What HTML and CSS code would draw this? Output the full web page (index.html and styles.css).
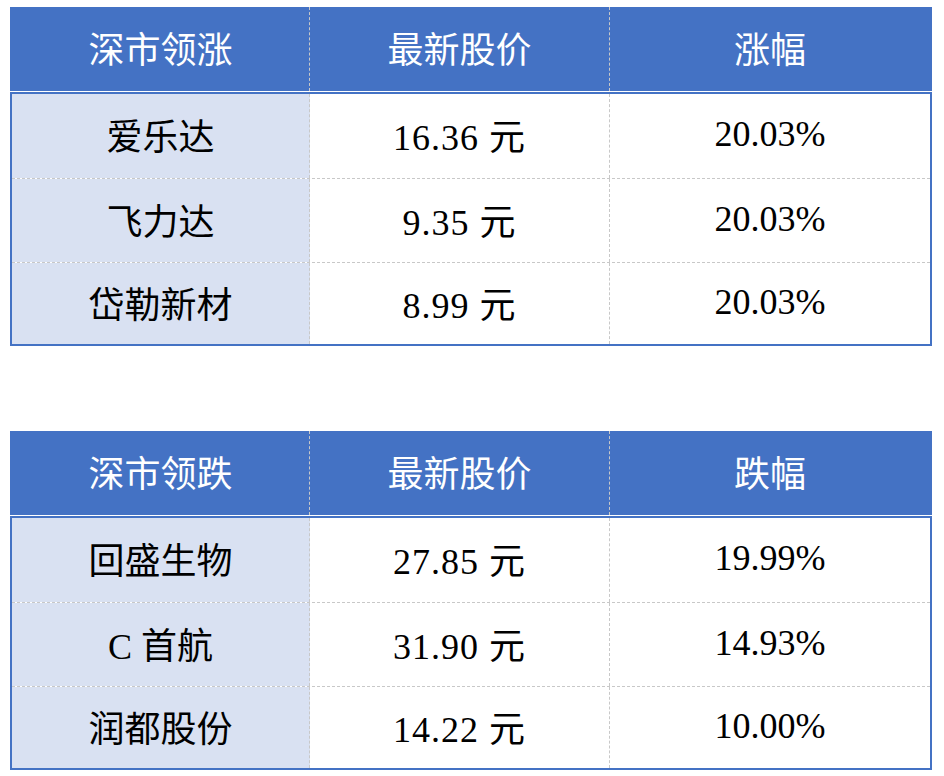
FILE: index.html
```html
<!DOCTYPE html>
<html lang="zh-CN">
<head>
<meta charset="utf-8">
<title>深市领涨领跌</title>
<link rel="stylesheet" href="styles.css">
</head>
<body>
<div class="page">
  <section class="board">
    <div class="row head">
      <div class="cell">深市领涨</div>
      <div class="cell">最新股价</div>
      <div class="cell">涨幅</div>
    </div>
    <div class="body">
      <div class="row first">
        <div class="cell name">爱乐达</div>
        <div class="cell price">16.36 元</div>
        <div class="cell">20.03%</div>
      </div>
      <div class="row">
        <div class="cell name">飞力达</div>
        <div class="cell price">9.35 元</div>
        <div class="cell">20.03%</div>
      </div>
      <div class="row last">
        <div class="cell name">岱勒新材</div>
        <div class="cell price">8.99 元</div>
        <div class="cell">20.03%</div>
      </div>
    </div>
  </section>

  <section class="board">
    <div class="row head">
      <div class="cell">深市领跌</div>
      <div class="cell">最新股价</div>
      <div class="cell">跌幅</div>
    </div>
    <div class="body">
      <div class="row first">
        <div class="cell name">回盛生物</div>
        <div class="cell price">27.85 元</div>
        <div class="cell">19.99%</div>
      </div>
      <div class="row">
        <div class="cell name">C 首航</div>
        <div class="cell price">31.90 元</div>
        <div class="cell">14.93%</div>
      </div>
      <div class="row last">
        <div class="cell name">润都股份</div>
        <div class="cell price">14.22 元</div>
        <div class="cell">10.00%</div>
      </div>
    </div>
  </section>
</div>
</body>
</html>
```

FILE: styles.css
```css
html, body {
  margin: 0;
  padding: 0;
  background: #ffffff;
}

.page {
  padding: 7px 0 0 10px;
  display: flex;
  flex-direction: column;
  gap: 85px;
  font-family: "Liberation Serif", "Noto Sans CJK SC", serif;
}

.board {
  width: 918px;
  border: 2px solid #4472c4;
  border-top: none;
}

.row {
  display: grid;
  grid-template-columns: 298px 300px 320px;
  height: 84px;
  border-bottom: 1px dashed #c8c8c8;
  box-sizing: border-box;
}

.row.first {
  height: 85px;
}

.row.last {
  height: 81px;
  border-bottom: none;
}

.cell {
  display: flex;
  align-items: center;
  justify-content: center;
  font-size: 36px;
  color: #000000;
  box-sizing: border-box;
  padding-bottom: 4px;
}

.price {
  letter-spacing: 1px;
}

.row .cell:nth-child(1),
.row .cell:nth-child(2) {
  border-right: 1px dashed #c8c8c8;
}

.head {
  height: 85px;
  margin: 0 -2px;
  padding: 0 2px;
  background: #4472c4;
  border-bottom: 1px solid #ffffff;
}

.head .cell {
  color: #ffffff;
  font-family: "Noto Sans CJK SC", sans-serif;
  font-weight: 400;
  padding-bottom: 4px;
}

.body {
  border-top: 2px solid #4472c4;
}

.name {
  background: #d9e1f2;
}
```
